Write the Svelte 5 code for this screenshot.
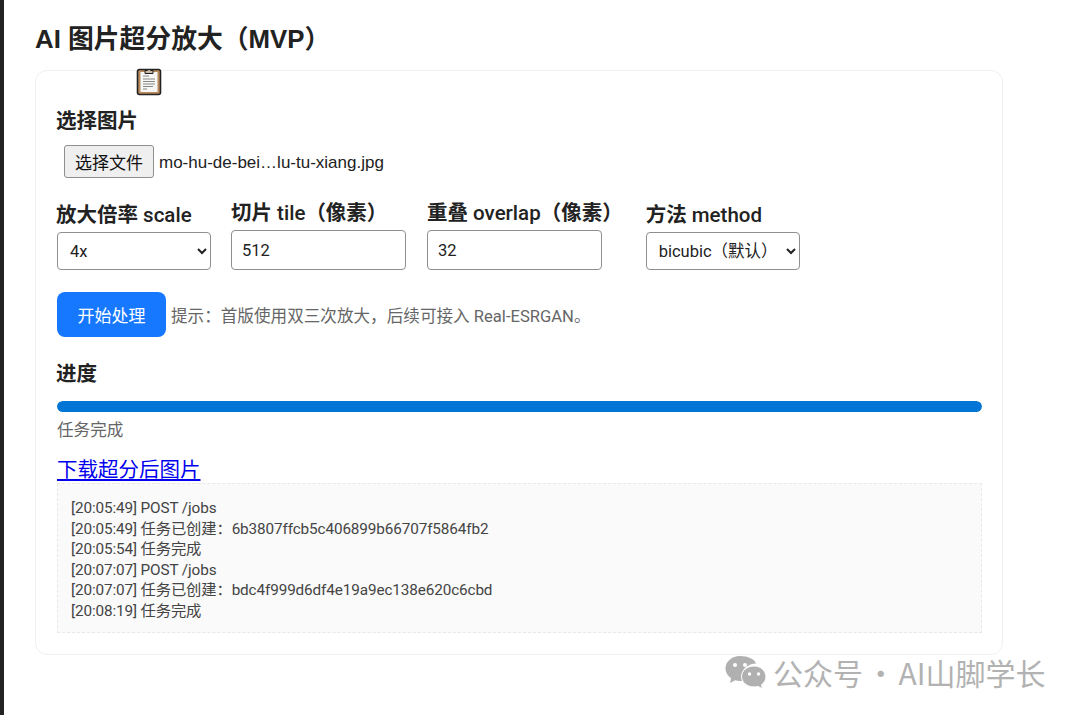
<script>
	const logs = [
		'[20:05:49] POST /jobs',
		'[20:05:49] 任务已创建：6b3807ffcb5c406899b66707f5864fb2',
		'[20:05:54] 任务完成',
		'[20:07:07] POST /jobs',
		'[20:07:07] 任务已创建：bdc4f999d6df4e19a9ec138e620c6cbd',
		'[20:08:19] 任务完成'
	];
</script>

<div class="page">
	<h1>AI 图片超分放大（MVP）</h1>

	<div class="card">
		<svg class="clip" width="26" height="30" viewBox="0 0 26 30">
			<rect x="1.500" y="3.500" width="23" height="25" rx="2" fill="#b98a5e" stroke="#222" stroke-width="1.600" />
			<rect x="4.500" y="6" width="17" height="20" fill="#f6f6f4" />
			<path d="M9 4.500h2.500a1.600 1.600 0 0 1 3 0H17v3H9z" fill="#c9b8a6" stroke="#222" stroke-width="1" />
			<path d="M7 10h6M7 13h12M7 15.500h12M7 18h12M7 20.500h10M7 23h4" stroke="#888" stroke-width="1.200" />
		</svg>

		<div class="section-label">选择图片</div>
		<div class="file-row">
			<button class="file-btn">选择文件</button>
			<span class="file-name">mo-hu-de-bei…lu-tu-xiang.jpg</span>
		</div>

		<div class="fields">
			<label class="field">
				<span>放大倍率 <em>scale</em></span>
				<select>
					<option>4x</option>
				</select>
			</label>
			<label class="field">
				<span>切片 <em>tile</em>（像素）</span>
				<input type="text" value="512" />
			</label>
			<label class="field">
				<span>重叠 <em>overlap</em>（像素）</span>
				<input type="text" value="32" />
			</label>
			<label class="field">
				<span>方法 <em>method</em></span>
				<select>
					<option>bicubic（默认）</option>
				</select>
			</label>
		</div>

		<div class="actions">
			<button class="primary">开始处理</button>
			<span class="hint">提示：首版使用双三次放大，后续可接入 Real-ESRGAN。</span>
		</div>

		<div class="section-label progress-label">进度</div>
		<div class="bar"><div class="fill" style="width: 100%"></div></div>
		<div class="status">任务完成</div>

		<a class="download" href="#top">下载超分后图片</a>

		<div class="log">
			{#each logs as line}
				<div>{line}</div>
			{/each}
		</div>
	</div>

	<div class="mark">
		<svg width="42" height="34" viewBox="0 0 42 34">
			<path d="M15 1C7 1 0.500 6.500 0.500 13.500c0 4 2.200 7.500 5.600 9.800L5 28l5.200-2.700c1.500 0.400 3.100 0.700 4.800 0.700 0.800 0 1.500 0 2.200-0.200-0.500-1.400-0.700-2.800-0.700-4.300 0-7.500 6.700-13 14.600-13C29.800 4.200 23 1 15 1z" fill="#b0b0b0" />
			<path d="M29 11c-6.900 0-12.500 4.700-12.500 10.500S22.100 32 29 32c1.400 0 2.700-0.200 4-0.600l4.500 2.400-1-4c2.800-1.900 4.500-4.900 4.500-8.300C40.500 15.700 35.900 11 29 11z" fill="#b0b0b0" stroke="#fff" stroke-width="1" />
			<circle cx="10" cy="10" r="2" fill="#fff" />
			<circle cx="20" cy="10" r="2" fill="#fff" />
			<circle cx="24.500" cy="19" r="1.700" fill="#fff" />
			<circle cx="33.500" cy="19" r="1.700" fill="#fff" />
		</svg>
		<span>公众号 · AI山脚学长</span>
	</div>
</div>

<style>
	:global(body) {
		margin: 0;
		background: #fff;
	}

	.page {
		position: relative;
		box-sizing: border-box;
		height: 715px;
		overflow: hidden;
		padding: 21px 77px 0 31px;
		border-left: 4px solid #222;
		font-family: 'Roboto', 'Noto Sans CJK SC', sans-serif;
		color: #222;
	}

	h1 {
		margin: 0 0 13px;
		font-family: 'Liberation Sans', 'Noto Sans CJK SC', sans-serif;
		font-size: 25.800px;
		line-height: 36px;
		font-weight: 700;
	}

	.card {
		position: relative;
		box-sizing: border-box;
		height: 585px;
		border: 1px solid #f0f0f0;
		border-radius: 12px;
		padding: 35px 20px 20px 21px;
	}

	.clip {
		position: absolute;
		left: 100px;
		top: -5px;
	}

	.section-label {
		margin-left: -1px;
		font-size: 20.500px;
		line-height: 30px;
		font-weight: 700;
	}

	.file-row {
		display: flex;
		align-items: center;
		gap: 5px;
		margin: 9px 0 0 7px;
	}

	.file-btn {
		box-sizing: border-box;
		width: 90px;
		height: 33px;
		padding: 0;
		background: #efefef;
		border: 1px solid #8f8f8f;
		border-radius: 3px;
		font: inherit;
		font-size: 17px;
		color: #111;
	}

	.file-name {
		padding-top: 3px;
		font-family: 'Liberation Sans', sans-serif;
		font-size: 17px;
		color: #222;
	}

	.fields {
		display: flex;
		align-items: flex-end;
		gap: 20px;
		margin-top: 20px;
	}

	.field {
		display: flex;
		flex-direction: column;
		gap: 2px;
	}

	.field span {
		font-size: 20.500px;
		line-height: 30px;
		font-weight: 700;
	}

	.field:first-child span {
		margin-left: -1px;
	}

	.field em {
		font-style: normal;
		font-weight: 500;
	}

	.field select {
		box-sizing: border-box;
		width: 154px;
		height: 38px;
		padding: 0 8px;
		background: #fff;
		border: 1px solid #8f8f8f;
		border-radius: 4px;
		font: inherit;
		font-size: 16.500px;
		color: #222;
	}

	.field input {
		box-sizing: border-box;
		width: 175px;
		height: 40px;
		padding: 0 10px;
		border: 1px solid #8f8f8f;
		border-radius: 4px;
		font: inherit;
		font-size: 16.500px;
		color: #222;
	}

	.field:nth-child(3) {
		margin-left: 1px;
	}

	.field:nth-child(4) {
		margin-left: 3px;
	}

	.actions {
		display: flex;
		align-items: center;
		gap: 5px;
		margin-top: 22px;
	}

	.primary {
		width: 109px;
		height: 45px;
		background: #1677ff;
		border: none;
		border-radius: 8px;
		font: inherit;
		font-size: 17px;
		color: #fff;
	}

	.hint {
		font-size: 16.600px;
		color: #666;
	}

	.progress-label {
		margin-top: 22px;
	}

	.bar {
		height: 11px;
		margin-top: 12px;
		border-radius: 6px;
		background: #e9e9e9;
		overflow: hidden;
	}

	.fill {
		height: 100%;
		background: #0075d6;
		border-radius: 6px;
	}

	.status {
		margin-top: 7px;
		font-size: 16.600px;
		line-height: 24px;
		color: #666;
	}

	.download {
		display: block;
		width: max-content;
		margin-top: 14px;
		font-size: 20.500px;
		line-height: 26px;
		color: #0000ee;
	}

	.log {
		box-sizing: border-box;
		height: 150px;
		padding: 14px 13px;
		background: #fafafa;
		border: 1px dashed #e8e8e8;
		font-size: 15.300px;
		line-height: 20.600px;
		letter-spacing: -0.120px;
		color: #444;
	}

	.mark {
		position: absolute;
		left: 721px;
		top: 655px;
		display: flex;
		align-items: center;
		gap: 6px;
		font-family: 'Noto Sans CJK SC', sans-serif;
		font-size: 30px;
		line-height: 34px;
		word-spacing: -4px;
		color: #b2b2b2;
		white-space: nowrap;
	}
</style>
